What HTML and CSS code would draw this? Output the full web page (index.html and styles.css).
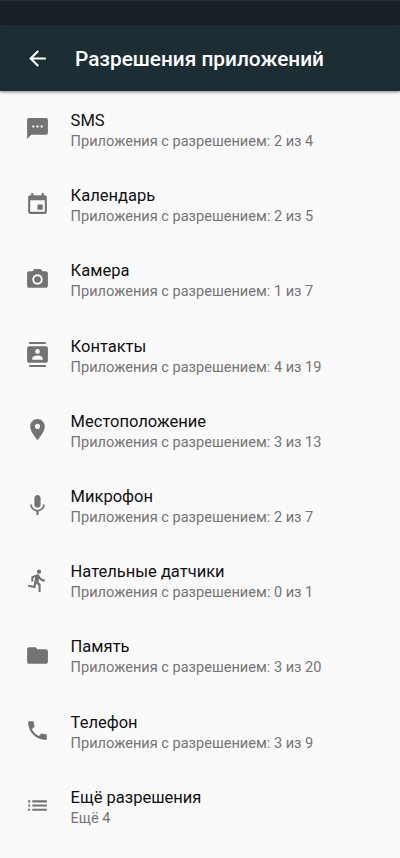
FILE: index.html
```html
<!DOCTYPE html>
<html lang="ru">
<head>
<meta charset="utf-8">
<title>Разрешения приложений</title>
<link rel="stylesheet" href="styles.css">
</head>
<body>
<div class="status"></div>
<header class="bar">
<svg class="back" viewBox="0 0 24 24"><path d="M20 11H7.83l5.59-5.59L12 4l-8 8 8 8 1.41-1.41L7.83 13H20v-2z"/></svg>
<h1 class="title">Разрешения приложений</h1>
</header>
<main class="list">
<div class="row"><svg class="icon" viewBox="0 0 24 24"><path d="M20 2H4c-1.1 0-1.99.9-1.99 2L2 22l4-4h14c1.1 0 2-.9 2-2V4c0-1.1-.9-2-2-2zM9 11H7V9h2v2zm4 0h-2V9h2v2zm4 0h-2V9h2v2z"/></svg><div class="text"><div class="name">SMS</div><div class="info">Приложения с разрешением: 2 из 4</div></div></div>
<div class="row"><svg class="icon" viewBox="0 0 24 24"><path d="M17 12h-5v5h5v-5zM16 1v2H8V1H6v2H5c-1.11 0-1.99.9-1.99 2L3 19c0 1.1.89 2 2 2h14c1.1 0 2-.9 2-2V5c0-1.1-.9-2-2-2h-1V1h-2zm3 18H5V8h14v11z"/></svg><div class="text"><div class="name">Календарь</div><div class="info">Приложения с разрешением: 2 из 5</div></div></div>
<div class="row"><svg class="icon" viewBox="0 0 24 24"><circle cx="12" cy="12" r="3.2"/><path d="M9 2L7.17 4H4c-1.1 0-2 .9-2 2v12c0 1.1.9 2 2 2h16c1.1 0 2-.9 2-2V6c0-1.1-.9-2-2-2h-3.17L15 2H9zm3 15c-2.76 0-5-2.24-5-5s2.24-5 5-5 5 2.24 5 5-2.24 5-5 5z"/></svg><div class="text"><div class="name">Камера</div><div class="info">Приложения с разрешением: 1 из 7</div></div></div>
<div class="row"><svg class="icon" viewBox="0 0 24 24"><path d="M20 0H4v2h16V0zM4 24h16v-2H4v2zM20 4H4c-1.1 0-2 .9-2 2v12c0 1.1.9 2 2 2h16c1.1 0 2-.9 2-2V6c0-1.1-.9-2-2-2zm-8 2.75c1.24 0 2.25 1.01 2.25 2.25s-1.01 2.25-2.25 2.25S9.75 10.24 9.75 9 10.76 6.75 12 6.75zM17 17H7v-1.5c0-1.67 3.33-2.5 5-2.5s5 .83 5 2.5V17z"/></svg><div class="text"><div class="name">Контакты</div><div class="info">Приложения с разрешением: 4 из 19</div></div></div>
<div class="row"><svg class="icon" viewBox="0 0 24 24"><path d="M12 2C8.13 2 5 5.13 5 9c0 5.25 7 13 7 13s7-7.75 7-13c0-3.87-3.13-7-7-7zm0 9.5c-1.38 0-2.5-1.12-2.5-2.5s1.12-2.5 2.5-2.5 2.5 1.12 2.5 2.5-1.12 2.5-2.5 2.5z"/></svg><div class="text"><div class="name">Местоположение</div><div class="info">Приложения с разрешением: 3 из 13</div></div></div>
<div class="row"><svg class="icon" viewBox="0 0 24 24"><path d="M12 14c1.66 0 2.99-1.34 2.99-3L15 5c0-1.66-1.34-3-3-3S9 3.34 9 5v6c0 1.66 1.34 3 3 3zm5.3-3c0 3-2.54 5.1-5.3 5.1S6.7 14 6.7 11H5c0 3.41 2.72 6.23 6 6.72V21h2v-3.28c3.28-.48 6-3.3 6-6.72h-1.7z"/></svg><div class="text"><div class="name">Микрофон</div><div class="info">Приложения с разрешением: 2 из 7</div></div></div>
<div class="row"><svg class="icon" viewBox="0 0 24 24"><path d="M13.49 5.48c1.1 0 2-.9 2-2s-.9-2-2-2-2 .9-2 2 .9 2 2 2zm-3.6 13.9l1-4.4 2.1 2v6h2v-7.5l-2.1-2 .6-3c1.3 1.5 3.3 2.5 5.5 2.5v-2c-1.9 0-3.5-1-4.3-2.4l-1-1.6c-.4-.6-1-1-1.7-1-.3 0-.5.1-.8.1l-5.2 2.2v4.7h2v-3.4l1.8-.7-1.6 8.1-4.9-1-.4 2 7 1.4z"/></svg><div class="text"><div class="name">Нательные датчики</div><div class="info">Приложения с разрешением: 0 из 1</div></div></div>
<div class="row"><svg class="icon" viewBox="0 0 24 24"><path d="M10 4H4c-1.1 0-1.99.9-1.99 2L2 18c0 1.1.9 2 2 2h16c1.1 0 2-.9 2-2V8c0-1.1-.9-2-2-2h-8l-2-2z"/></svg><div class="text"><div class="name">Память</div><div class="info">Приложения с разрешением: 3 из 20</div></div></div>
<div class="row"><svg class="icon" viewBox="0 0 24 24"><path d="M6.62 10.79c1.44 2.83 3.76 5.14 6.59 6.59l2.2-2.2c.27-.27.67-.36 1.02-.24 1.12.37 2.33.57 3.57.57.55 0 1 .45 1 1V20c0 .55-.45 1-1 1-9.39 0-17-7.61-17-17 0-.55.45-1 1-1h3.5c.55 0 1 .45 1 1 0 1.25.2 2.45.57 3.57.11.35.03.74-.25 1.02l-2.2 2.2z"/></svg><div class="text"><div class="name">Телефон</div><div class="info">Приложения с разрешением: 3 из 9</div></div></div>
<div class="row"><svg class="icon" viewBox="0 0 24 24"><path d="M3 13h2v-2H3v2zm0 4h2v-2H3v2zm0-8h2V7H3v2zm4 4h14v-2H7v2zm0 4h14v-2H7v2zM7 7v2h14V7H7z"/></svg><div class="text"><div class="name">Ещё разрешения</div><div class="info">Ещё 4</div></div></div>
</main>
</body>
</html>
```
FILE: styles.css
```css
* { box-sizing: border-box; }
body { margin: 0; height: 858px; overflow: hidden; background: #fafafa; font-family: Roboto, sans-serif; }
.status { height: 25px; background: #1a2027; border-top: 1px solid #263037; }
.bar { height: 66px; padding: 1px 25px 0; display: flex; align-items: center; gap: 25px; background: #1d2d34; box-shadow: 0 1px 3px rgba(0,0,0,.5); }
.back { width: 25px; height: 25px; fill: #fff; }
.title { margin: 0; font-size: 20.8px; line-height: 26px; font-weight: 500; color: #fff; white-space: nowrap; }
.list { padding-top: 1.3px; }
.row { height: 75.22px; padding: 0 25px; display: flex; align-items: center; gap: 20.6px; }
.icon { width: 25px; height: 25px; flex: none; fill: #737373; margin-bottom: 2px; }
.name { padding-top: 1px; font-size: 16.5px; line-height: 21px; color: #111; }
.info { font-size: 14.57px; line-height: 20px; color: #757575; white-space: nowrap; }
```
